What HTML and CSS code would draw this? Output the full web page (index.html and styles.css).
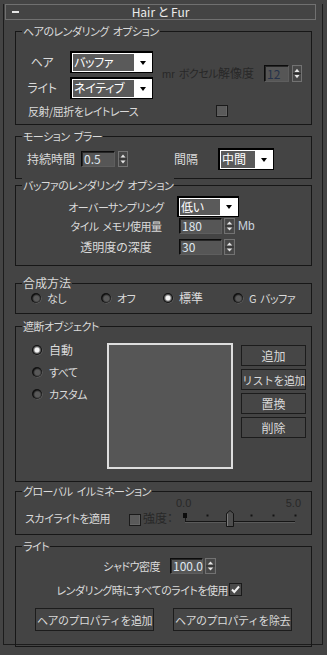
FILE: index.html
```html
<!DOCTYPE html>
<html lang="ja">
<head>
<meta charset="utf-8">
<title>Hair と Fur</title>
<link rel="stylesheet" href="styles.css">
</head>
<body>
<div class="rollout">
  <div class="titlebar">
    <span class="collapse"></span>
    <span class="title-text">Hair と Fur</span>
    <span></span>
  </div>

  <section class="group g1">
    <div class="legend">ヘアのレンダリング オプション</div>
    <div class="g1-main">
      <div class="g1-col">
        <div class="dd-row">
          <span class="lbl-c">ヘア</span>
          <div class="dropdown w83"><span class="dd-text">バッファ</span><span class="dd-arrow"><i class="tri"></i></span></div>
        </div>
        <div class="dd-row">
          <span class="lbl-c">ライト</span>
          <div class="dropdown w83"><span class="dd-text">ネイティブ</span><span class="dd-arrow"><i class="tri"></i></span></div>
        </div>
      </div>
      <div class="voxel">
        <span class="voxel-lbl dis"><span class="mr">mr</span> ボクセル<span class="kj">解像度</span></span>
        <span class="field field-dis w25 h17">12</span>
        <svg class="arrows h17 ml3" viewBox="0 0 10 16" preserveAspectRatio="none"><rect x="0.5" y="0.5" width="9" height="15" fill="#474747" stroke="#727272"/><path d="M2.5 6.5h5L5 3.5z" fill="#e4e4e4"/><path d="M2.5 9.5h5L5 12.5z" fill="#e4e4e4"/><path d="M1 8h8" stroke="#2c2c2c"/></svg>
      </div>
    </div>
    <div class="rt-row">
      <span class="rt-lbl">反射/屈折をレイトレース</span>
      <span class="cb"></span>
    </div>
  </section>

  <section class="group g2">
    <div class="legend">モーション ブラー</div>
    <div class="g2-row">
      <span class="dur-lbl kj">持続時間</span>
      <span class="field w34 h16">0.5</span>
      <svg class="arrows h16 ml3" viewBox="0 0 10 16" preserveAspectRatio="none"><rect x="0.5" y="0.5" width="9" height="15" fill="#474747" stroke="#727272"/><path d="M2.5 6.5h5L5 3.5z" fill="#e4e4e4"/><path d="M2.5 9.5h5L5 12.5z" fill="#e4e4e4"/><path d="M1 8h8" stroke="#2c2c2c"/></svg>
      <span class="int-lbl kj">間隔</span>
      <div class="dropdown w56"><span class="dd-text kj">中間</span><span class="dd-arrow"><i class="tri"></i></span></div>
    </div>
  </section>

  <section class="group g3">
    <div class="legend">バッファのレンダリング オプション</div>
    <div class="g3-row r1">
      <span class="g3-lbl">オーバーサンプリング</span>
      <div class="dropdown w62 h21"><span class="dd-text">低い</span><span class="dd-arrow"><i class="tri"></i></span></div>
    </div>
    <div class="g3-row r2">
      <span class="g3-lbl">タイル メモリ使用量</span>
      <span class="field w43 h16 ml3">180</span>
      <svg class="arrows h16 w11 ml2" viewBox="0 0 10 16" preserveAspectRatio="none"><rect x="0.5" y="0.5" width="9" height="15" fill="#474747" stroke="#727272"/><path d="M2.5 6.5h5L5 3.5z" fill="#e4e4e4"/><path d="M2.5 9.5h5L5 12.5z" fill="#e4e4e4"/><path d="M1 8h8" stroke="#2c2c2c"/></svg>
      <span class="unit">Mb</span>
    </div>
    <div class="g3-row r3">
      <span class="g3-lbl kj">透明度の深度</span>
      <span class="field w43 h16 ml3">30</span>
      <svg class="arrows h16 w11 ml2" viewBox="0 0 10 16" preserveAspectRatio="none"><rect x="0.5" y="0.5" width="9" height="15" fill="#474747" stroke="#727272"/><path d="M2.5 6.5h5L5 3.5z" fill="#e4e4e4"/><path d="M2.5 9.5h5L5 12.5z" fill="#e4e4e4"/><path d="M1 8h8" stroke="#2c2c2c"/></svg>
    </div>
  </section>

  <section class="group g4">
    <div class="legend kj">合成方法</div>
    <div class="g4-row">
      <label class="ropt o1"><span class="radio"></span>なし</label>
      <label class="ropt o2"><span class="radio"></span>オフ</label>
      <label class="ropt o3"><span class="radio on"></span><span class="kj">標準</span></label>
      <label class="ropt"><span class="radio"></span>G バッファ</label>
    </div>
  </section>

  <section class="group g5">
    <div class="legend">遮断オブジェクト</div>
    <div class="g5-body">
      <div class="g5-radios">
        <label class="ropt r7"><span class="radio on"></span><span class="kj">自動</span></label>
        <label class="ropt r7"><span class="radio"></span>すべて</label>
        <label class="ropt r7"><span class="radio"></span>カスタム</label>
      </div>
      <div class="listbox"></div>
      <div class="g5-btns">
        <button class="btn kj">追加</button>
        <button class="btn">リストを追加</button>
        <button class="btn kj">置換</button>
        <button class="btn kj">削除</button>
      </div>
    </div>
  </section>

  <section class="group g6">
    <div class="legend">グローバル イルミネーション</div>
    <div class="g6-row">
      <span class="sky-lbl">スカイライトを適用</span>
      <span class="cb sky-cb"></span>
      <span class="str-lbl dis kj">強度：</span>
      <div class="slider">
        <div class="scale dis"><span>0.0</span><span>5.0</span></div>
        <svg class="slider-svg" width="125" height="22" viewBox="0 0 125 22">
          <path d="M9.5 9v4.5" stroke="#1a1a1a"/>
          <path d="M9 13.5h110" stroke="#151515"/>
          <path d="M9 14.5h110" stroke="#5a5a5a"/>
          <rect x="7" y="5" width="4" height="5" fill="#0c0c0c"/>
          <rect x="30.5" y="6.5" width="2" height="2" fill="#141414"/>
          <rect x="74.5" y="6.5" width="2" height="2" fill="#141414"/>
          <rect x="96.5" y="6.5" width="2" height="2" fill="#141414"/>
          <rect x="118.5" y="6.5" width="2" height="2" fill="#141414"/>
          <path d="M50.5 5.5L54 2.5L57.5 5.5V18.5H50.5Z" fill="#4e4e4e" stroke="#151515"/>
          <path d="M51.5 6v12" stroke="#7a7a7a"/>
        </svg>
      </div>
    </div>
  </section>

  <section class="group g7">
    <div class="legend">ライト</div>
    <div class="g7-row1">
      <span class="shd-lbl">シャドウ密度</span>
      <span class="field w33 h16">100.0</span>
      <svg class="arrows h16 w11 ml2" viewBox="0 0 10 16" preserveAspectRatio="none"><rect x="0.5" y="0.5" width="9" height="15" fill="#474747" stroke="#727272"/><path d="M2.5 6.5h5L5 3.5z" fill="#e4e4e4"/><path d="M2.5 9.5h5L5 12.5z" fill="#e4e4e4"/><path d="M1 8h8" stroke="#2c2c2c"/></svg>
    </div>
    <div class="g7-row2">
      <span class="all-lbl">レンダリング時にすべてのライトを使用</span>
      <span class="cb cb-on"><svg width="11" height="11" viewBox="0 0 11 11"><path d="M2 5.5l2.3 2.5L9 2.5" fill="none" stroke="#f2f2f2" stroke-width="2"/></svg></span>
    </div>
    <div class="g7-row3">
      <button class="btn btn-wide">ヘアのプロパティを追加</button>
      <button class="btn btn-wide">ヘアのプロパティを除去</button>
    </div>
  </section>
</div>
</body>
</html>
```

FILE: styles.css
```css
* { box-sizing: border-box; }
html, body { margin: 0; padding: 0; }
body {
  background: #444444;
  width: 327px;
  height: 655px;
  overflow: hidden;
  font-family: "Noto Sans CJK JP", "Noto Sans", sans-serif;
  font-size: 11px;
  letter-spacing: -0.5px;
  word-spacing: 2px;
  line-height: 14px;
  color: #dadada;
  font-feature-settings: "palt";
}
.kj { font-size: 12px; letter-spacing: 0; }
.rollout {
  margin: 12px 0 0 3px;
  width: 320px;
  height: 641px;
  border: 1px solid #1c1c1c;
  border-top: none;
}
.titlebar {
  margin: -8px 0 0 1px;
  width: 311px;
  height: 16px;
  border: 1px solid #707070;
  display: grid;
  grid-template-columns: 1fr auto 1fr;
  align-items: center;
}
.collapse {
  display: block;
  width: 7px;
  height: 2px;
  margin-left: 6px;
  background: #e6e6e6;
}
.title-text { color: #ececec; line-height: 14px; font-size: 12px; letter-spacing: 0; word-spacing: 0; }

.group {
  margin-left: 11px;
  width: 297px;
  border: 1px solid #171717;
}
.legend {
  width: fit-content;
  height: 14px;
  margin: -8px 0 0 6px;
  padding: 0 1px;
  line-height: 14px;
  background: #444444;
  white-space: nowrap;
}
.g1 { margin-top: 11px; height: 94px; }
.g2 { margin-top: 11px; height: 43px; }
.g3 { margin-top: 6px; height: 81px; }
.g4 { margin-top: 17px; height: 31px; }
.g5 { margin-top: 12px; height: 156px; }
.g6 { margin-top: 9px; height: 44px; }
.g7 { margin-top: 11px; height: 101px; }

.dis { color: #282828; }
.ml2 { margin-left: 2px; }
.ml3 { margin-left: 3px; }

/* dropdown */
.dropdown {
  display: flex;
  height: 22px;
  border-style: solid;
  border-color: #000;
  border-width: 2px 1px 1px 2px;
  background: #fff;
  padding: 1px;
  flex: none;
}
.dropdown.h21 { height: 21px; }
.w83 { width: 83px; }
.w56 { width: 56px; }
.w62 { width: 62px; }
.dd-text {
  flex: 1;
  background: #5a5a5a;
  color: #fff;
  font-size: 12px;
  letter-spacing: -0.3px;
  line-height: 16px;
  padding-left: 1px;
  white-space: nowrap;
  overflow: hidden;
}
.dd-text.kj { letter-spacing: 0; }
.dd-arrow {
  width: 17px;
  display: flex;
  align-items: center;
  justify-content: center;
}
.tri {
  width: 0;
  height: 0;
  border-left: 3.5px solid transparent;
  border-right: 3.5px solid transparent;
  border-top: 4px solid #000;
}

/* spinner field */
.field {
  display: block;
  flex: none;
  border: 1px solid;
  border-color: #0c0c0c #5e5e5e #5e5e5e #0c0c0c;
  box-shadow: inset 1px 1px 0 #262626;
  background: #565656;
  color: #dfe6ef;
  padding-left: 2px;
  font-size: 12px;
  letter-spacing: 0;
  line-height: 14px;
  white-space: nowrap;
}
.field-dis { color: #26324a; }
.h16 { height: 16px; }
.h17 { height: 17px; line-height: 15px; }
.w25 { width: 25px; }
.w33 { width: 33px; }
.w34 { width: 34px; }
.w43 { width: 43px; }
.arrows { display: block; flex: none; width: 10px; }
.arrows.h16 { height: 16px; }
.arrows.h17 { height: 17px; }
.arrows.w11 { width: 11px; }

/* checkbox */
.cb {
  display: block;
  flex: none;
  width: 12px;
  height: 12px;
  border: 1px solid #1a1a1a;
  background: #5a5a5a;
  box-shadow: inset -1px -1px 0 #666;
}
.cb-on {
  width: 13px;
  height: 13px;
  background: #4a4a4a;
  box-shadow: none;
  padding: 0;
}
.cb-on svg { display: block; }

/* radio */
.ropt { display: flex; align-items: center; gap: 6px; height: 14px; white-space: nowrap; }
.radio {
  display: block;
  flex: none;
  width: 10px;
  height: 10px;
  border-radius: 50%;
  background: radial-gradient(circle at 55% 55%, #595959 0 2.5px, #3a3a3a 3.5px, #111 4.5px);
  box-shadow: 0.5px 0.5px 0 #6a6a6a;
}
.radio.on {
  background: radial-gradient(circle at 50% 50%, #f4f4f4 0 2px, #9a9a9a 2.8px, #5a5a5a 3.5px, #111 4.5px);
}

/* group 1 */
.g1-main { display: flex; margin-top: 13px; padding-left: 4px; }
.g1-col { display: flex; flex-direction: column; gap: 4px; }
.dd-row { display: flex; align-items: center; }
.lbl-c { width: 44px; margin-right: 6px; text-align: center; font-size: 12px; letter-spacing: -0.3px; }
.voxel { display: flex; align-items: center; height: 17px; margin: 14px 0 0 9px; }
.voxel-lbl { width: 102px; white-space: nowrap; }
.mr { font-family: "Liberation Sans", sans-serif; font-size: 11px; letter-spacing: 0; }
.rt-row { display: flex; align-items: center; height: 12px; margin-top: 6px; padding-left: 12px; }
.rt-lbl { width: 188px; white-space: nowrap; }

/* group 2 */
.g2-row { display: flex; align-items: center; height: 22px; margin-top: 5px; padding-left: 11px; }
.dur-lbl { width: 48px; margin-right: 6px; }
.int-lbl { width: 24px; margin-left: 46px; margin-right: 20px; white-space: nowrap; }

/* group 3 */
.g3-row { display: flex; align-items: center; padding-left: 40px; }
.g3-row.r1 { height: 21px; margin-top: 4px; }
.g3-row.r2 { height: 16px; margin-top: 1px; }
.g3-row.r3 { height: 16px; margin-top: 5px; }
.g3-lbl { width: 120px; text-align: center; white-space: nowrap; }
.r1 .dropdown { margin-left: 1px; }
.unit { margin-left: 3px; color: #c9d2de; font-family: "Liberation Sans", sans-serif; font-size: 12px; letter-spacing: 0; }

/* group 4 */
.g4-row { display: flex; align-items: center; height: 13px; margin-top: 1px; padding-left: 15px; }
.o1 { width: 70px; }
.o2 { width: 62px; }
.o3 { width: 70px; }

/* group 5 */
.g5-body { display: flex; margin-top: 10px; padding-left: 16px; }
.g5-radios { width: 75px; display: flex; flex-direction: column; gap: 8px; }
.r7 { gap: 7px; }
.listbox {
  width: 126px;
  height: 126px;
  border: 2px solid #dedede;
  background: #565656;
  flex: none;
}
.g5-btns { display: flex; flex-direction: column; gap: 3px; width: 65px; margin: 2px 0 0 8px; }
.btn {
  height: 21px;
  padding: 0;
  border: 1px solid #1c1c1c;
  background: #464646;
  color: #dadada;
  font-family: inherit;
  font-size: 11px;
  letter-spacing: -0.5px;
  line-height: 14px;
  white-space: nowrap;
}
.btn.kj { font-size: 12px; letter-spacing: 0; }

/* group 6 */
.g6-row { display: flex; align-items: flex-start; padding-left: 9px; }
.sky-lbl { width: 104px; margin-top: 13px; white-space: nowrap; }
.sky-cb { margin-top: 16px; }
.str-lbl { width: 33px; margin: 13px 0 0 2px; white-space: nowrap; }
.slider { width: 125px; display: flex; flex-direction: column; }
.scale { display: flex; justify-content: space-between; height: 10px; line-height: 10px; font-family: "Liberation Sans", sans-serif; font-size: 11px; letter-spacing: 0; }
.slider-svg { display: block; }

/* group 7 */
.g7-row1 { display: flex; align-items: center; height: 16px; margin-top: 5px; padding-left: 84px; }
.shd-lbl { width: 60px; margin-right: 10px; text-align: right; white-space: nowrap; }
.g7-row2 { display: flex; align-items: center; height: 13px; margin-top: 9px; padding-left: 38px; }
.all-lbl { width: 174px; margin-right: 1px; text-align: right; white-space: nowrap; }
.g7-row3 { display: flex; gap: 19px; margin-top: 12px; padding-left: 19px; }
.btn-wide { width: 119px; height: 23px; }
```
